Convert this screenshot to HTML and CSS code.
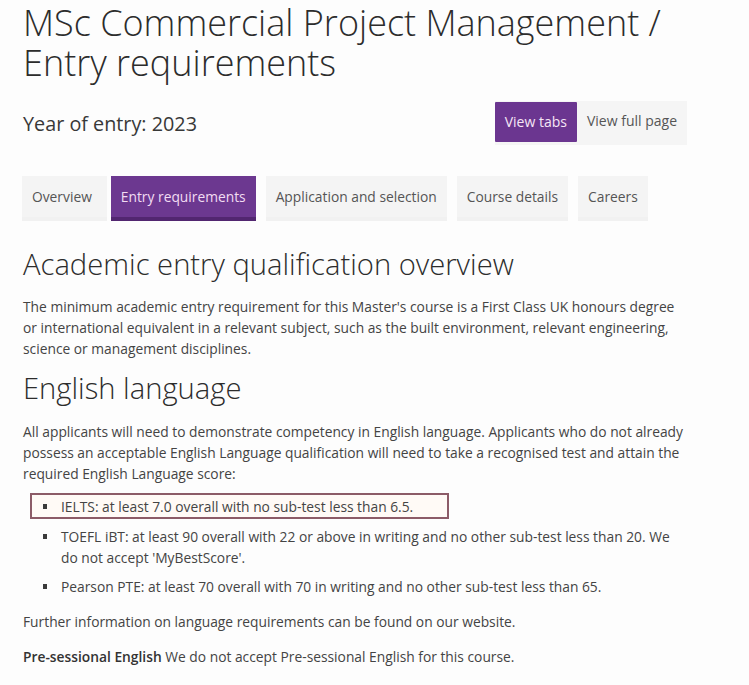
FILE: index.html
```html
<!DOCTYPE html>
<html lang="en">
<head>
<meta charset="utf-8">
<title>MSc Commercial Project Management / Entry requirements</title>
<link rel="stylesheet" href="styles.css">
</head>
<body>
<main class="page">
  <h1 class="title">MSc Commercial Project Management / Entry requirements</h1>

  <div class="year-row">
    <p class="year">Year of entry: 2023</p>
    <div class="view-toggle">
      <a class="view-btn active">View tabs</a>
      <a class="view-btn">View full page</a>
    </div>
  </div>

  <nav class="tabs">
    <a class="tab first">Overview</a>
    <a class="tab active">Entry requirements</a>
    <a class="tab">Application and selection</a>
    <a class="tab">Course details</a>
    <a class="tab">Careers</a>
  </nav>

  <h2 class="section-title">Academic entry qualification overview</h2>
  <p class="text">The minimum academic entry requirement for this Master's course is a First Class UK honours degree or international equivalent in a relevant subject, such as the built environment, relevant engineering, science or management disciplines.</p>

  <h2 class="section-title second">English language</h2>
  <p class="text">All applicants will need to demonstrate competency in English language. Applicants who do not already possess an acceptable English Language qualification will need to take a recognised test and attain the required English Language score:</p>

  <ul class="reqs">
    <li class="req highlight">IELTS: at least 7.0 overall with no sub-test less than 6.5.</li>
    <li class="req">TOEFL iBT: at least 90 overall with 22 or above in writing and no other sub-test less than 20. We do not accept 'MyBestScore'.</li>
    <li class="req">Pearson PTE: at least 70 overall with 70 in writing and no other sub-test less than 65.</li>
  </ul>

  <p class="text gap">Further information on language requirements can be found on our website.</p>
  <p class="text gap"><strong class="strong">Pre-sessional English</strong> We do not accept Pre-sessional English for this course.</p>
</main>
</body>
</html>
```

FILE: styles.css
```css
html, body {
  margin: 0;
  padding: 0;
  background: #fdfdfd;
}

body {
  font-family: "Open Sans", "DejaVu Sans", sans-serif;
  color: #404040;
}

.page {
  width: 664px;
  padding-left: 23px;
}

.title {
  margin: 3px 0 0;
  font-size: 36px;
  line-height: 40px;
  font-weight: 300;
  color: #2c2c2c;
}

.year-row {
  margin-top: 18px;
  height: 44px;
  display: flex;
  align-items: center;
  justify-content: space-between;
}

.year {
  margin: 0;
  font-size: 19.8px;
  font-weight: 400;
  color: #383838;
}

.view-toggle {
  display: flex;
  align-items: flex-start;
  height: 44px;
  background: #f5f5f5;
}

.view-btn {
  display: block;
  height: 40px;
  line-height: 40px;
  padding: 0 10px;
  font-size: 14px;
  color: #555;
}

.view-btn.active {
  margin-top: 1px;
  background: #6b3690;
  color: #f6e6f6;
  border-radius: 1px;
}

.tabs {
  margin-top: 31px;
  display: flex;
  gap: 10px;
}

.tab {
  display: block;
  height: 41px;
  line-height: 41px;
  padding: 0 10px;
  font-size: 13.8px;
  color: #555;
  background: #f4f4f4;
  border-bottom: 4px solid #f1f1f1;
}

.tab.first {
  padding-right: 15px;
  margin-left: -1px;
  margin-right: -6px;
}

.tab.active {
  background: #6c3890;
  color: #f2dcf2;
  border-bottom-color: #522670;
}

.section-title {
  margin: 26px 0 15px;
  font-size: 29.2px;
  line-height: 34px;
  font-weight: 300;
  color: #2c2c2c;
}

.section-title.second {
  margin-top: 12px;
  margin-bottom: 16px;
}

.text {
  margin: 0;
  font-size: 13.8px;
  line-height: 21px;
  color: #444;
}

.text.gap {
  margin-top: 14px;
}

.strong {
  font-weight: 600;
  color: #333;
}

.reqs {
  list-style: none;
  margin: 9px 0 0;
  padding: 0 0 0 7px;
}

.req {
  display: grid;
  grid-template-columns: 29px 1fr;
  margin-bottom: 8px;
  font-size: 13.8px;
  line-height: 21px;
  color: #444;
  border: 2px solid transparent;
  border-width: 0 2px;
}

.req::before {
  content: "";
  width: 4px;
  height: 5px;
  margin: 8px 0 0 11px;
  background: #3a3a3a;
}

.req.highlight {
  width: fit-content;
  margin-bottom: 7px;
  padding: 0.5px 34px 0.5px 0;
  border: 2px solid #8c5b67;
  background: #fffaf6;
}

.req:last-child {
  margin-bottom: 0;
}
```
